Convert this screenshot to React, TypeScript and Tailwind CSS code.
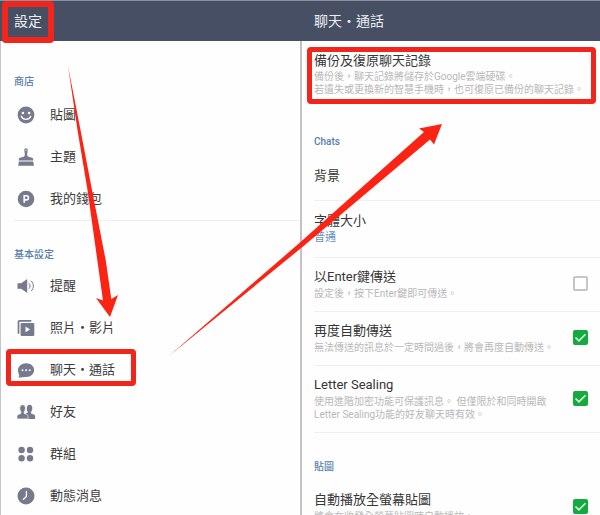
import type { ReactNode } from 'react';

type Setting = {
  id: string;
  title: string;
  lines: string[];
  checked: boolean;
};

const shopItems = [
  { label: '貼圖', icon: <SmileIcon /> },
  { label: '主題', icon: <BrushIcon /> },
  { label: '我的錢包', icon: <WalletIcon /> },
];

const basicItems = [
  { label: '提醒', icon: <SpeakerIcon /> },
  { label: '照片・影片', icon: <MediaIcon /> },
  { label: '聊天・通話', icon: <ChatIcon />, marked: true },
  { label: '好友', icon: <FriendsIcon /> },
  { label: '群組', icon: <GroupIcon /> },
  { label: '動態消息', icon: <ClockIcon /> },
];

const chatSettings: Setting[] = [
  { id: 'enter', title: '以Enter鍵傳送', lines: ['設定後，按下Enter鍵即可傳送。'], checked: false },
  { id: 'resend', title: '再度自動傳送', lines: ['無法傳送的訊息於一定時間過後，將會再度自動傳送。'], checked: true },
  {
    id: 'sealing',
    title: 'Letter Sealing',
    lines: ['使用進階加密功能可保護訊息。 但僅限於和同時開啟', 'Letter Sealing功能的好友聊天時有效。'],
    checked: true,
  },
];

const stickerSettings: Setting[] = [
  { id: 'autoplay', title: '自動播放全螢幕貼圖', lines: ['將會在收發全螢幕貼圖時自動播放。'], checked: true },
];

function Icon({ children }: { children: ReactNode }) {
  return (
    <svg viewBox="0 0 20 20" className="size-5 shrink-0" fill="#777a8c" aria-hidden="true">
      {children}
    </svg>
  );
}

function SmileIcon() {
  return (
    <Icon>
      <circle cx="10" cy="10" r="8.4" />
      <circle cx="6.9" cy="8" r="1.3" fill="#fff" />
      <circle cx="13.1" cy="8" r="1.3" fill="#fff" />
      <path d="M5.200 11.300c1 2.100 2.700 3.100 4.800 3.100s3.800-1 4.800-3.100" fill="none" stroke="#fff" strokeWidth="1.400" strokeLinecap="round" />
    </Icon>
  );
}

function BrushIcon() {
  return (
    <Icon>
      <path d="M10 1.200c1.200 0 1.800.8 1.700 2l-.6 4.200c.1 1.500.9 2.100 2.200 2.500l2.700.8c.8.300 1.200.8 1.200 1.600v1.100H2.800v-1.100c0-.8.4-1.300 1.200-1.600l2.700-.8c1.300-.4 2.100-1 2.200-2.500L8.300 3.200c-.1-1.200.5-2 1.700-2Z" />
      <path d="M2.800 14.400h14.400l.8 4.400H2.200c0-1.300.6-2.700.6-4.400Z" />
      <circle cx="10" cy="3.200" r=".6" fill="#fff" />
    </Icon>
  );
}

function WalletIcon() {
  return (
    <Icon>
      <circle cx="10" cy="10" r="8.300" />
      <path d="M8.200 13.800V6.800h2.200a2 2 0 0 1 0 4.100H8.200" fill="none" stroke="#fff" strokeWidth="1.600" />
    </Icon>
  );
}

function SpeakerIcon() {
  return (
    <Icon>
      <path d="M1.500 7.200h3.700L11.200 3v14l-6-4.200H1.500Z" />
      <path d="M13 7.300c1.300 1.600 1.300 3.800 0 5.400M15.100 4.800c3 3 3 7.400 0 10.400" fill="none" stroke="#777a8c" strokeWidth="1" />
    </Icon>
  );
}

function MediaIcon() {
  return (
    <Icon>
      <path d="M15.300 2.800H3.500a1 1 0 0 0-1 1v12" fill="none" stroke="#777a8c" strokeWidth="1.700" />
      <rect x="4.600" y="4.900" width="13.700" height="13" rx="1.200" />
      <path d="m9.500 8.600 4.600 2.800-4.600 2.800Z" fill="#fff" />
    </Icon>
  );
}

function ChatIcon() {
  return (
    <Icon>
      <path d="M10.200 3.200c4.500 0 7.900 2.900 7.900 6.800s-3.400 7-7.900 7c-2.400.1-5.200.4-8.200.7 1-.8 1.300-1.700 1.100-2.800C2.300 13.300 2 11.700 2 10.100c0-3.900 3.700-6.900 8.200-6.900Z" />
      <circle cx="6.500" cy="10.200" r="1" fill="#fff" />
      <circle cx="10.100" cy="10.200" r="1" fill="#fff" />
      <circle cx="13.700" cy="10.200" r="1" fill="#fff" />
    </Icon>
  );
}

function FriendsIcon() {
  return (
    <Icon>
      <path d="M13.600 2.800c1.800 0 2.700 1.400 2.700 3.300 0 1.700-.5 2.900-1.200 3.700v1.600l2.700 1.100c.9.4 1.300 1 1.300 1.900v2.500h-8.400l-1-5.400 1.900-.8V9.800c-.6-.8-.8-1.900-.8-3.500 0-1.900 1-3.500 2.800-3.500Z" />
      <path d="M6.700 2.800c1.800 0 2.700 1.400 2.700 3.300 0 1.700-.5 2.900-1.200 3.700v1.600l2.600 1.100c.9.4 1.300 1 1.300 1.900v2.500H1v-2.500c0-.9.4-1.500 1.300-1.900L5 11.400V9.800c-.7-.8-1.200-2-1.200-3.700 0-1.900 1-3.300 2.900-3.300Z" stroke="#fff" strokeWidth=".6" />
    </Icon>
  );
}

function GroupIcon() {
  return (
    <Icon>
      <circle cx="5.600" cy="6" r="3.200" />
      <circle cx="14" cy="6" r="3.200" />
      <circle cx="5.600" cy="14.300" r="3.200" />
      <circle cx="14" cy="14.300" r="3.200" />
    </Icon>
  );
}

function ClockIcon() {
  return (
    <Icon>
      <circle cx="10" cy="10" r="8.500" />
      <path d="M10.400 5.400v5l-3 2.900" fill="none" stroke="#fff" strokeWidth="1.300" strokeLinecap="round" />
    </Icon>
  );
}

function SectionLabel({ children }: { children: ReactNode }) {
  return <h2 className="pt-[26px] text-[10px] leading-4 font-medium text-[#587fae]">{children}</h2>;
}

function MenuItem({ label, icon, marked }: { label: string; icon: ReactNode; marked?: boolean }) {
  return (
    <li className="relative">
      <a href="#" className="flex h-[42px] items-center gap-3.5 pl-0.5 text-[13px] text-[#3d3d3d]">
        {icon}
        {label}
      </a>
      {marked && <span className="absolute top-0 -left-2 h-[37px] w-[130px] rounded-sm border-[5px] border-[#f0251b]" />}
    </li>
  );
}

function SettingRow({ id, title, lines, checked }: Setting) {
  return (
    <div className="flex items-center justify-between border-b border-[#f0f0f0] pt-[9px] pr-3 pb-[11px]">
      <label htmlFor={id}>
        <span className="block text-[13px] leading-[19px] text-[#363636]">{title}</span>
        <span className="mt-px block text-[10px] leading-[13px] whitespace-nowrap text-[#b8b8b8]">
          {lines.map((line) => (
            <span key={line} className="block">{line}</span>
          ))}
        </span>
      </label>
      <span className="grid shrink-0">
        <input
          id={id}
          type="checkbox"
          defaultChecked={checked}
          className="peer col-start-1 row-start-1 size-[15px] appearance-none rounded-[2px] border-2 border-[#c6c6c6] bg-white checked:border-[#15aa3f] checked:bg-[#15aa3f]"
        />
        <svg viewBox="0 0 15 15" className="pointer-events-none invisible col-start-1 row-start-1 size-[15px] peer-checked:visible" fill="none" stroke="#d9ffe2" strokeWidth="1.600">
          <path d="m2.500 7.500 3.400 3.300 6.600-6.600" />
        </svg>
      </span>
    </div>
  );
}

export default function App() {
  return (
    <div
      lang="zh-TW"
      className="relative grid h-screen grid-cols-2 overflow-hidden bg-[#fefefe] font-[Roboto,'Noto_Sans_CJK_TC',sans-serif]"
    >
      {/* Settings menu */}
      <section>
        <header className="relative flex h-[41px] items-center border-t border-[#8b91a0] bg-[#464f63] pl-3.5">
          <h1 className="text-sm text-[#eceef3]">設定</h1>
          <span className="absolute top-0 left-0.5 h-[42px] w-[52px] rounded-sm border-[6px] border-[#f0251b]" />
        </header>
        <nav className="border-l border-[#c5c3cc] pt-[7px] pl-[13px]">
          <SectionLabel>商店</SectionLabel>
          <ul className="border-b border-[#f0f0f0] pt-1">
            {shopItems.map((item) => (
              <MenuItem key={item.label} {...item} />
            ))}
          </ul>
          <SectionLabel>基本設定</SectionLabel>
          <ul className="pt-0.5">
            {basicItems.map((item) => (
              <MenuItem key={item.label} {...item} />
            ))}
          </ul>
        </nav>
      </section>

      {/* Chat settings */}
      <section>
        <header className="flex h-[41px] items-center border-t border-[#8b91a0] bg-[#464f63] pl-3.5">
          <h1 className="text-sm text-[#eceef3]">聊天・通話</h1>
        </header>
        <div className="border-l-2 border-[#c3c3c7] pl-3">
          <div className="relative pt-2.5 pb-3">
            <a href="#" className="block">
              <span className="block text-[13px] leading-[19px] text-[#363636]">備份及復原聊天記錄</span>
              <span className="block text-[10px] leading-[13px] whitespace-nowrap text-[#b8b8b8]">
                備份後，聊天記錄將儲存於Google雲端硬碟。
                <br />
                若遺失或更換新的智慧手機時，也可復原已備份的聊天記錄。
              </span>
            </a>
            <span className="pointer-events-none absolute top-1.5 right-1 -left-[7px] h-[57px] rounded-sm border-[5px] border-[#f0251b]" />
          </div>

          <SectionLabel>Chats</SectionLabel>
          <button type="button" className="block w-full border-b border-[#f0f0f0] pt-4 pb-[15px] text-left text-[13px] leading-[19px] text-[#363636]">
            背景
          </button>
          <button type="button" className="block w-full border-b border-[#f0f0f0] pt-2.5 pb-[11px] text-left">
            <span className="block text-[13px] leading-[19px] text-[#363636]">字體大小</span>
            <span className="block text-[11px] leading-4 text-[#6c8fc4]">普通</span>
          </button>
          {chatSettings.map((setting) => (
            <SettingRow key={setting.id} {...setting} />
          ))}

          <SectionLabel>貼圖</SectionLabel>
          <div className="pt-1.5">
            {stickerSettings.map((setting) => (
              <SettingRow key={setting.id} {...setting} />
            ))}
          </div>
        </div>
      </section>

      {/* Guide arrows */}
      <svg viewBox="0 0 600 515" className="pointer-events-none absolute top-0 left-0 h-[515px] w-[600px]" fill="#fb2314" aria-hidden="true">
        <path d="M68 66 80.500 130 92 190 105.700 260 111.300 299 118 295 110 317 96 298 103 300.500 97.300 260 87.500 190 77.500 130Z" />
        <path d="M169 356 300 242.500 424 132 419 128.500 442 124 434 144.500 430 139.500 303 246.500Z" />
      </svg>
    </div>
  );
}
